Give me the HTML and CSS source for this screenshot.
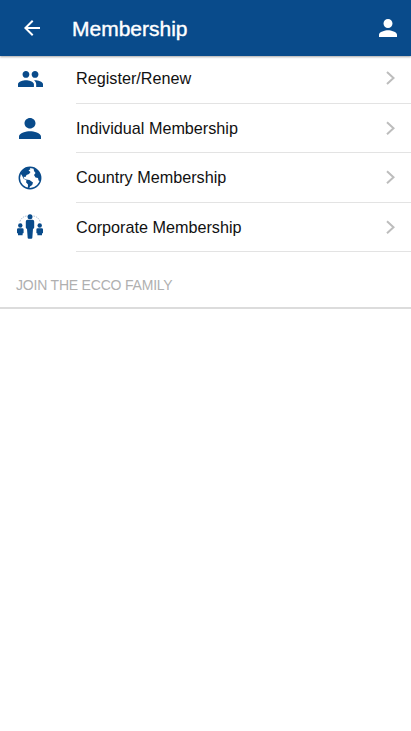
FILE: index.html
```html
<!DOCTYPE html>
<html lang="en">
<head>
    <meta charset="UTF-8">
    <meta name="viewport" content="width=device-width, initial-scale=1.0">
    <title>Membership</title>
    <link rel="stylesheet" href="styles.css">
</head>
<body>
    <header class="toolbar">
        <svg class="back" viewBox="4 4 16 16"><path d="M20 11H7.83l5.59-5.59L12 4l-8 8 8 8 1.41-1.41L7.83 13H20z"/></svg>
        <h1>Membership</h1>
        <svg class="account" viewBox="4 4 16 16"><path d="M12 12c2.21 0 4-1.79 4-4s-1.79-4-4-4-4 1.79-4 4 1.79 4 4 4zm0 2c-2.67 0-8 1.34-8 4v2h16v-2c0-2.66-5.33-4-8-4z"/></svg>
    </header>

    <ul class="menu">
        <li class="item">
            <span class="icon">
                <svg width="25" height="16" viewBox="1 5 22 14"><path d="M16 11c1.66 0 2.99-1.34 2.99-3S17.66 5 16 5s-3 1.34-3 3 1.34 3 3 3zm-8 0c1.66 0 2.99-1.34 2.99-3S9.66 5 8 5 5 6.34 5 8s1.34 3 3 3zm0 2c-2.33 0-7 1.17-7 3.5V19h14v-2.5c0-2.33-4.67-3.5-7-3.5zm8 0c-.29 0-.62.02-.97.05 1.16.84 1.97 1.97 1.97 3.45V19h6v-2.5c0-2.33-4.67-3.5-7-3.5z"/></svg>
            </span>
            <span class="label">Register/Renew</span>
            <svg class="chevron" viewBox="0 0 9 14"><path d="M1 1l6.5 6L1 13"/></svg>
        </li>
        <li class="item">
            <span class="icon">
                <svg width="22" height="21" viewBox="4 4 16 16" preserveAspectRatio="none"><path d="M12 12c2.21 0 4-1.79 4-4s-1.79-4-4-4-4 1.79-4 4 1.79 4 4 4zm0 2c-2.67 0-8 1.34-8 4v2h16v-2c0-2.66-5.33-4-8-4z"/></svg>
            </span>
            <span class="label">Individual Membership</span>
            <svg class="chevron" viewBox="0 0 9 14"><path d="M1 1l6.500 6L1 13"/></svg>
        </li>
        <li class="item">
            <span class="icon">
                <svg width="24" height="24" viewBox="0 0 24 24">
                    <circle class="ring" cx="12" cy="12" r="10.7"/>
                    <path d="M2.500 7.500L6 3l5-2 1.500 2-2 1.500 2 1.500-1.500 2-2.500 1-1 2-2-.3.8 2 1.700.8 3.500.5 3.500 2.500-.8 2.500-2.200 1.500-1 2.500-1.200-1 .2-3.500-2-2.200.5-1.800-3-2-1.500-3z"/>
                    <path d="M15.500 2l4.500 2.500 2.800 5.500-.8 5-1.500-.5-.5-2.500-2.500-.5-1.500-2.500 1.500-2-1.500-2z"/>
                </svg>
            </span>
            <span class="label">Country Membership</span>
            <svg class="chevron" viewBox="0 0 9 14"><path d="M1 1l6.5 6L1 13"/></svg>
        </li>
        <li class="item">
            <span class="icon">
                <svg width="26" height="25" viewBox="0 0 26 25">
                    <path class="link" d="M3 7.500Q4.500 3 9.500 2M16.500 2Q21.500 3 23 7.500"/>
                    <circle cx="13" cy="2.800" r="2.500"/>
                    <path d="M10.500 5.800h5q1.700 0 1.700 1.700v6q0 1.300-1.200 1.300L15.300 24q-.1.800-1 .8h-2.600q-.9 0-1-.8L10 14.800q-1.200 0-1.200-1.300v-6q0-1.700 1.700-1.700z"/>
                    <circle cx="3.300" cy="11.500" r="2.200"/>
                    <path d="M1.300 14.200h4q1.300 0 1.300 1.300V19l-1 .5v1.800H1v-1.800L0 19v-3.500q0-1.300 1.300-1.300z"/>
                    <circle cx="22.700" cy="11.500" r="2.200"/>
                    <path d="M20.700 14.200h4q1.300 0 1.300 1.300V19l-1 .5v1.800h-4.600v-1.800l-1-.5v-3.500q0-1.300 1.300-1.300z"/>
                </svg>
            </span>
            <span class="label">Corporate Membership</span>
            <svg class="chevron" viewBox="0 0 9 14"><path d="M1 1l6.5 6L1 13"/></svg>
        </li>
    </ul>

    <h2 class="section-title">JOIN THE ECCO FAMILY</h2>
</body>
</html>
```

FILE: styles.css
```css
* {
    box-sizing: border-box;
}
body {
    margin: 0;
    background-color: #fff;
    color: #111;
    font-family: "Liberation Sans", Arial, sans-serif;
}
.toolbar {
    display: flex;
    align-items: center;
    height: 56px;
    padding: 0 14px 0 24px;
    background-color: #094b8b;
    color: #fff;
    fill: #fff;
    box-shadow: 0 1px 2px rgba(0, 0, 0, 0.35);
}
.back {
    width: 16px;
    height: 16px;
}
.toolbar h1 {
    flex: 1;
    margin: 1px 0 0 32px;
    font-size: 21px;
    font-weight: normal;
    line-height: 24px;
    -webkit-text-stroke: 0.4px #fff;
}
.account {
    width: 18px;
    height: 18px;
}
.menu {
    margin: 0;
    padding: 0;
    list-style: none;
}
.item {
    display: flex;
    height: 49.4px;
    padding-left: 16px;
}
.item:first-child {
    height: 48px;
}
.icon {
    display: flex;
    align-items: center;
    justify-content: center;
    width: 28px;
    margin-right: 32px;
    padding-bottom: 1px;
    fill: #094b8b;
}
.item:first-child .icon {
    padding-bottom: 3px;
}
.ring {
    fill: none;
    stroke: #094b8b;
    stroke-width: 1.5;
}
.link {
    fill: none;
    stroke: #8fabc8;
    stroke-width: 0.8;
    stroke-dasharray: 1.5 1;
}
.label {
    flex: 1;
    display: flex;
    align-items: center;
    border-bottom: 1px solid #e3e3e3;
    font-size: 16.2px;
}
.item:first-child .label,
.item:first-child .chevron {
    padding-bottom: 3px;
}
.item:last-child .label {
    padding-top: 1px;
}
.chevron {
    box-sizing: content-box;
    width: 9px;
    padding-right: 16px;
    border-bottom: 1px solid #e3e3e3;
    fill: none;
    stroke: #bdbdbd;
    stroke-width: 2;
}
.section-title {
    margin: 0;
    padding: 25px 16px 14px;
    border-bottom: 2px solid #dcdcdc;
    color: #b0b0b0;
    font-size: 14px;
    font-weight: normal;
    line-height: 16px;
    letter-spacing: -0.2px;
}
```
